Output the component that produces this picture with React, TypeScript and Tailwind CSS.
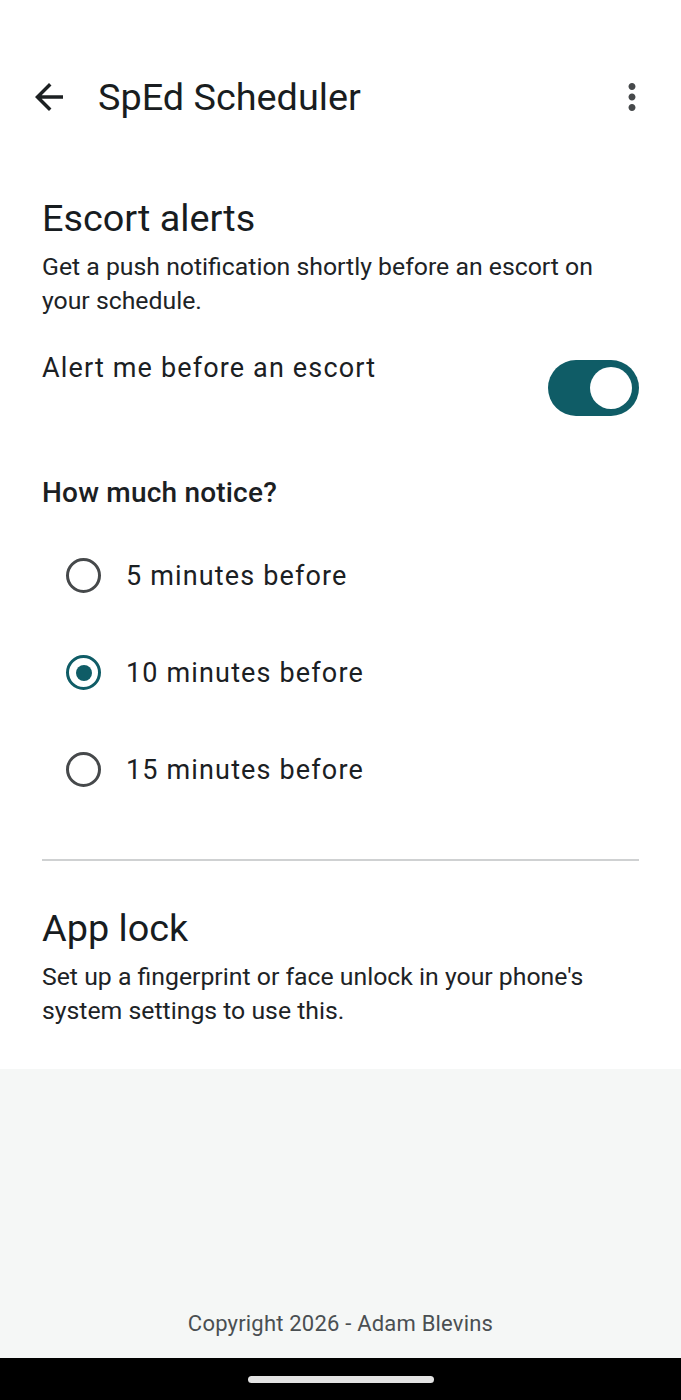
import React, { useState } from "react";

const options = ["5 minutes before", "10 minutes before", "15 minutes before"];

function BackArrow() {
  return (
    <svg width="42" height="42" viewBox="0 0 24 24" fill="#1c2022">
      <path d="M20 11H7.83l5.59-5.59L12 4l-8 8 8 8 1.41-1.41L7.83 13H20v-2z" />
    </svg>
  );
}

function MoreVert() {
  return (
    <svg width="42" height="42" viewBox="0 0 24 24" fill="#46494b">
      <path d="M12 8c1.1 0 2-.9 2-2s-.9-2-2-2-2 .9-2 2 .9 2 2 2zm0 2c-1.1 0-2 .9-2 2s.9 2 2 2 2-.9 2-2-.9-2-2-2zm0 6c-1.1 0-2 .9-2 2s.9 2 2 2 2-.9 2-2-.9-2-2-2z" />
    </svg>
  );
}

export default function App() {
  const [enabled, setEnabled] = useState(true);
  const [selected, setSelected] = useState(1);

  return (
    <div
      className="h-[1400px] w-full flex flex-col bg-white text-[#1b2023]"
      style={{ fontFamily: "Roboto, 'Noto Sans', sans-serif" }}
    >
      <div className="bg-white pt-[56px] pb-[41px]">
        {/* App bar */}
        <div className="h-[82px] flex items-center">
          <div className="w-[98px] pl-[28px] flex items-center">
            <BackArrow />
          </div>
          <div className="flex-1 text-[37.8px] leading-[44px] text-[#191d20]">SpEd Scheduler</div>
          <div className="pr-[28px] flex items-center">
            <MoreVert />
          </div>
        </div>

        <div className="px-[42px]">
          {/* Escort alerts */}
          <h2 className="mt-[58px] text-[37.8px] leading-[44px] font-normal text-[#171c1f]">Escort alerts</h2>
          <p className="mt-[10px] text-[24.8px] leading-[34px] text-[#1d2326]">
            Get a push notification shortly before an escort on your schedule.
          </p>

          <div className="mt-[33px] flex items-start justify-between">
            <span className="text-[27px] leading-[34px] tracking-[1.15px] text-[#1b2023]">
              Alert me before an escort
            </span>
            <button
              onClick={() => setEnabled(!enabled)}
              className={`mt-[9px] w-[91px] h-[56px] rounded-full flex items-center px-[7px] ${
                enabled ? "bg-[#0f5c66] justify-end" : "bg-[#dde3e4] justify-start"
              }`}
            >
              <span className="block w-[42px] h-[42px] rounded-full bg-white" />
            </button>
          </div>

          <div className="mt-[60px] text-[28px] leading-[34px] font-medium tracking-[0.2px] text-[#1b2023]">
            How much notice?
          </div>

          <div className="mt-[17px] flex flex-col">
            {options.map((opt, i) => (
              <button
                key={opt}
                onClick={() => setSelected(i)}
                className="h-[97px] flex items-center pl-[24px] text-left"
              >
                <span
                  className={`w-[35px] h-[35px] rounded-full border-[3px] flex items-center justify-center ${
                    selected === i ? "border-[#0f5c66]" : "border-[#46494b]"
                  }`}
                >
                  {selected === i && <span className="block w-[16px] h-[16px] rounded-full bg-[#0f5c66]" />}
                </span>
                <span className="ml-[25px] text-[27px] leading-[34px] tracking-[1.15px] text-[#1b2023]">{opt}</span>
              </button>
            ))}
          </div>

          <div className="mt-[41px] h-[2px] bg-[#cfd1d2]" />

          {/* App lock */}
          <h2 className="mt-[45px] text-[37.8px] leading-[44px] font-normal text-[#171c1f]">App lock</h2>
          <p className="mt-[10px] text-[24.8px] leading-[34px] text-[#1d2326]">
            Set up a fingerprint or face unlock in your phone's system settings to use this.
          </p>
        </div>
      </div>

      {/* Footer */}
      <div className="flex-1 bg-[#f5f7f6] flex flex-col justify-end items-center pb-[19px]">
        <span className="text-[22px] leading-[30px] tracking-[0.2px] text-[#4a4f52]">
          Copyright 2026 - Adam Blevins
        </span>
      </div>

      {/* Navigation bar */}
      <div className="h-[42px] bg-black flex items-center justify-center">
        <span className="block w-[186px] h-[7px] rounded-full bg-[#e3e3e3]" />
      </div>
    </div>
  );
}
